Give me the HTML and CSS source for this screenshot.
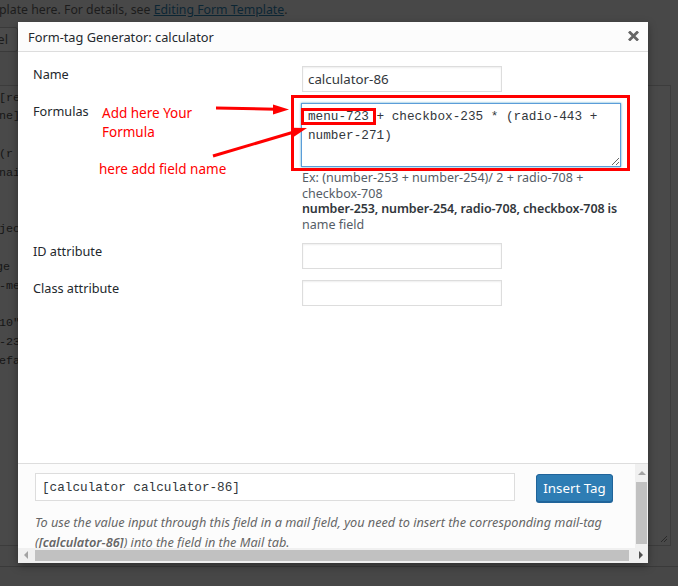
FILE: index.html
```html
<!DOCTYPE html>
<html>
<head>
<meta charset="utf-8">
<link rel="stylesheet" href="styles.css">
</head>
<body>
<div class="page">
  <div class="note">plate here. For details, see <a href="#">Editing Form Template</a>.</div>
  <div class="toolbar"><span class="bg-btn">el</span></div>
  <div class="code">
    <div class="ln">[re</div>
    <div class="ln">ne]</div>
    <div class="ln"> </div>
    <div class="ln">(r</div>
    <div class="ln">nai</div>
    <div class="ln"> </div>
    <div class="ln"> </div>
    <div class="ln">jec</div>
    <div class="ln"> </div>
    <div class="ln ln-short">ge</div>
    <div class="ln">-me</div>
    <div class="ln"> </div>
    <div class="ln">10"</div>
    <div class="ln">-23</div>
    <div class="ln">efa</div>
    <svg class="grip" width="8" height="8" viewBox="0 0 8 8"><path d="M7 1 L1 7 M7 4 L4 7" stroke="#2a2a2a" stroke-width="1"/></svg>
  </div>
  <div class="below"></div>
</div>

<div class="modal">
  <div class="m-head">
    <span class="title">Form-tag Generator: calculator</span>
    <svg class="close" width="11" height="10" viewBox="0 0 11 10"><path d="M1 0.5 L10 9.5 M10 0.5 L1 9.5" stroke="#666" stroke-width="2.8"/></svg>
  </div>
  <div class="m-body">
    <label class="lbl">Name</label>
    <input class="field" type="text" value="calculator-86">
    <label class="lbl">Formulas</label>
    <div class="formula">
      <textarea class="formula-input">menu-723 + checkbox-235 * (radio-443 + number-271)</textarea>
      <p class="desc">Ex: (number-253 + number-254)/ 2 + radio-708 + checkbox-708<br><b>number-253, number-254, radio-708, checkbox-708 is</b> name field</p>
    </div>
    <label class="lbl">ID attribute</label>
    <input class="field" type="text" value="">
    <label class="lbl">Class attribute</label>
    <input class="field" type="text" value="">
  </div>
  <div class="m-foot">
    <div class="foot-main">
      <div class="foot-content">
        <div class="tag-row">
          <input class="tag" type="text" value="[calculator calculator-86]">
          <button class="insert">Insert Tag</button>
        </div>
        <p class="mailtag">To use the value input through this field in a mail field, you need to insert the corresponding mail-tag (<b>[calculator-86]</b>) into the field in the Mail tab.</p>
      </div>
      <div class="vscroll">
        <span class="arr-up"></span>
        <span class="vthumb"></span>
      </div>
    </div>
    <div class="hscroll">
      <span class="arr-left"></span>
      <span class="hthumb"></span>
      <span class="arr-right"></span>
    </div>
  </div>
</div>

<div class="box-big"></div>
<div class="box-small"></div>
<div class="note-red note-formula">Add here Your<br>Formula</div>
<div class="note-red note-field">here add field name</div>
<svg class="arrows" width="678" height="586" viewBox="0 0 678 586">
  <line x1="216" y1="108" x2="276" y2="109.2" stroke="#ff0000" stroke-width="3"/>
  <polygon points="289,109.5 273,104.5 273,114.5" fill="#ff0000"/>
  <line x1="213" y1="156" x2="294" y2="132" stroke="#ff0000" stroke-width="3"/>
  <polygon points="307,128 293.9,136.8 291.1,127.8" fill="#ff0000"/>
</svg>
</body>
</html>
```
FILE: styles.css
```css
html, body {
  margin: 0;
  padding: 0;
}
body {
  width: 678px;
  height: 586px;
  overflow: hidden;
  position: relative;
  background: #484848;
  font-family: "Noto Sans", "Open Sans", sans-serif;
}
.page {
  width: 678px;
  height: 586px;
  overflow: hidden;
}
.note {
  height: 20px;
  line-height: 20px;
  font-size: 12.3px;
  color: #1c1c1c;
  white-space: nowrap;
  margin-left: -1px;
}
.note a {
  color: #0c2634;
  text-decoration: underline;
}
.toolbar {
  height: 65px;
  padding-top: 7px;
  box-sizing: border-box;
}
.bg-btn {
  display: block;
  width: 48px;
  height: 25px;
  margin-left: -30px;
  box-sizing: border-box;
  border: 1px solid #3a3a3a;
  border-radius: 3px;
  background: #4b4b4b;
  text-align: right;
  padding-right: 9px;
  font-size: 13px;
  line-height: 23px;
  color: #1c1c1c;
}
.code {
  position: relative;
  margin-left: -2px;
  width: 673px;
  height: 461px;
  box-sizing: border-box;
  border: 1px solid #3c3c3c;
  background: #494949;
  padding: 2.6px 0 0 0;
  font-family: "Liberation Mono", monospace;
  font-size: 11.7px;
  line-height: 18.8px;
  color: #161616;
}
.ln {
  height: 18.8px;
  white-space: pre;
}
.ln-short {
  margin-left: -3px;
}
.grip {
  position: absolute;
  right: 2px;
  bottom: 2px;
}
.below {
  margin-top: 20px;
  border-top: 1px solid #3a3a3a;
  height: 30px;
  background: #474747;
}

/* modal */
.modal {
  position: absolute;
  left: 18px;
  top: 22px;
  width: 630px;
  height: 541px;
  background: #fff;
  box-shadow: 0 3px 8px rgba(0,0,0,0.35);
  display: flex;
  flex-direction: column;
}
.m-head {
  height: 29px;
  flex: none;
  border-bottom: 1px solid #dddddd;
  background: #fcfcfc;
  display: flex;
  align-items: center;
  justify-content: space-between;
  padding: 0 9px 0 10px;
}
.title {
  font-size: 12.8px;
  color: #23282d;
}
.close {
  display: block;
  margin-top: -2px;
}
.m-body {
  flex: none;
  height: 411px;
  box-sizing: border-box;
  padding: 14px 0 0 15px;
  display: grid;
  grid-template-columns: 269px 330px;
  grid-auto-rows: min-content;
  row-gap: 11px;
  align-items: start;
}
.lbl {
  font-size: 12.7px;
  line-height: 16px;
  color: #23282d;
}
.field {
  display: block;
  width: 200px;
  height: 26px;
  box-sizing: border-box;
  margin: 0;
  border: 1px solid #dddddd;
  box-shadow: inset 0 1px 2px rgba(0,0,0,0.07);
  padding: 2px 5px;
  font-family: "Noto Sans", sans-serif;
  font-size: 13.3px;
  color: #32373c;
  background: #fff;
  outline: none;
}
.formula-input {
  display: block;
  width: 320px;
  height: 64px;
  box-sizing: border-box;
  margin: 0 0 0 -1px;
  border: 1px solid #5b9dd9;
  box-shadow: 0 0 2px rgba(30,140,190,0.8);
  padding: 4px 6px;
  font-family: "Liberation Mono", monospace;
  font-size: 12.7px;
  line-height: 18.5px;
  color: #32373c;
  outline: none;
  resize: both;
  overflow: hidden;
}
.desc {
  margin: 3px 0 0;
  width: 322px;
  font-size: 12.5px;
  line-height: 15.5px;
  color: #555d66;
}
.desc b {
  font-weight: 600;
  letter-spacing: -0.12px;
  color: #32373c;
}

/* footer */
.m-foot {
  flex: none;
  border-top: 1px solid #dddddd;
  background: #fcfcfc;
  display: flex;
  flex-direction: column;
}
.foot-main {
  height: 84px;
  display: flex;
}
.foot-content {
  flex: 1;
  overflow: hidden;
  padding: 9px 0 0 17px;
}
.tag-row {
  display: flex;
  align-items: flex-start;
}
.tag {
  width: 480px;
  height: 28px;
  box-sizing: border-box;
  margin: 0;
  border: 1px solid #dddddd;
  background: #fff;
  padding: 0 6px;
  font-family: "Liberation Mono", monospace;
  font-size: 12.7px;
  color: #32373c;
  outline: none;
}
.insert {
  margin: 1px 0 0 21px;
  width: 77px;
  height: 28px;
  box-sizing: border-box;
  border: 1px solid #20649a;
  border-radius: 3px;
  background: #2e7db4;
  box-shadow: 0 1px 0 #20649a;
  color: #fff;
  font-family: "Noto Sans", sans-serif;
  font-size: 13.3px;
  padding: 0;
}
.mailtag {
  margin: 10px 0 0;
  width: 600px;
  font-size: 12.7px;
  line-height: 20px;
  font-style: italic;
  color: #666666;
}
.mailtag b {
  font-weight: 600;
}
.vscroll {
  width: 13px;
  background: #f0f0f0;
  display: flex;
  flex-direction: column;
  align-items: center;
}
.arr-up {
  margin-top: 7px;
  width: 0;
  height: 0;
  border-left: 4px solid transparent;
  border-right: 4px solid transparent;
  border-bottom: 4px solid #a3a3a3;
}
.vthumb {
  margin-top: 7px;
  width: 11px;
  height: 62px;
  background: #c1c1c1;
}
.hscroll {
  height: 15px;
  background: #f0f0f0;
  display: flex;
  align-items: center;
  padding-bottom: 1px;
  box-sizing: border-box;
}
.arr-left {
  margin-left: 6px;
  width: 0;
  height: 0;
  border-top: 4px solid transparent;
  border-bottom: 4px solid transparent;
  border-right: 4px solid #a3a3a3;
}
.hthumb {
  margin-left: 7px;
  width: 594px;
  height: 11px;
  background: #c1c1c1;
}
.arr-right {
  margin-left: 10px;
  width: 0;
  height: 0;
  border-top: 4px solid transparent;
  border-bottom: 4px solid transparent;
  border-left: 4px solid #505050;
}

/* annotations */
.box-big {
  position: absolute;
  left: 291px;
  top: 95px;
  width: 339px;
  height: 76px;
  box-sizing: border-box;
  border: 3px solid #ff0000;
}
.box-small {
  position: absolute;
  left: 301px;
  top: 108px;
  width: 75px;
  height: 17px;
  box-sizing: border-box;
  border: 3px solid #ff0000;
}
.note-red {
  position: absolute;
  color: #ff0000;
  font-size: 13.5px;
  line-height: 19px;
  font-family: "Noto Sans", sans-serif;
}
.note-formula {
  left: 102px;
  top: 104px;
}
.note-field {
  left: 99px;
  top: 160px;
}
.arrows {
  position: absolute;
  left: 0;
  top: 0;
  pointer-events: none;
}
```
